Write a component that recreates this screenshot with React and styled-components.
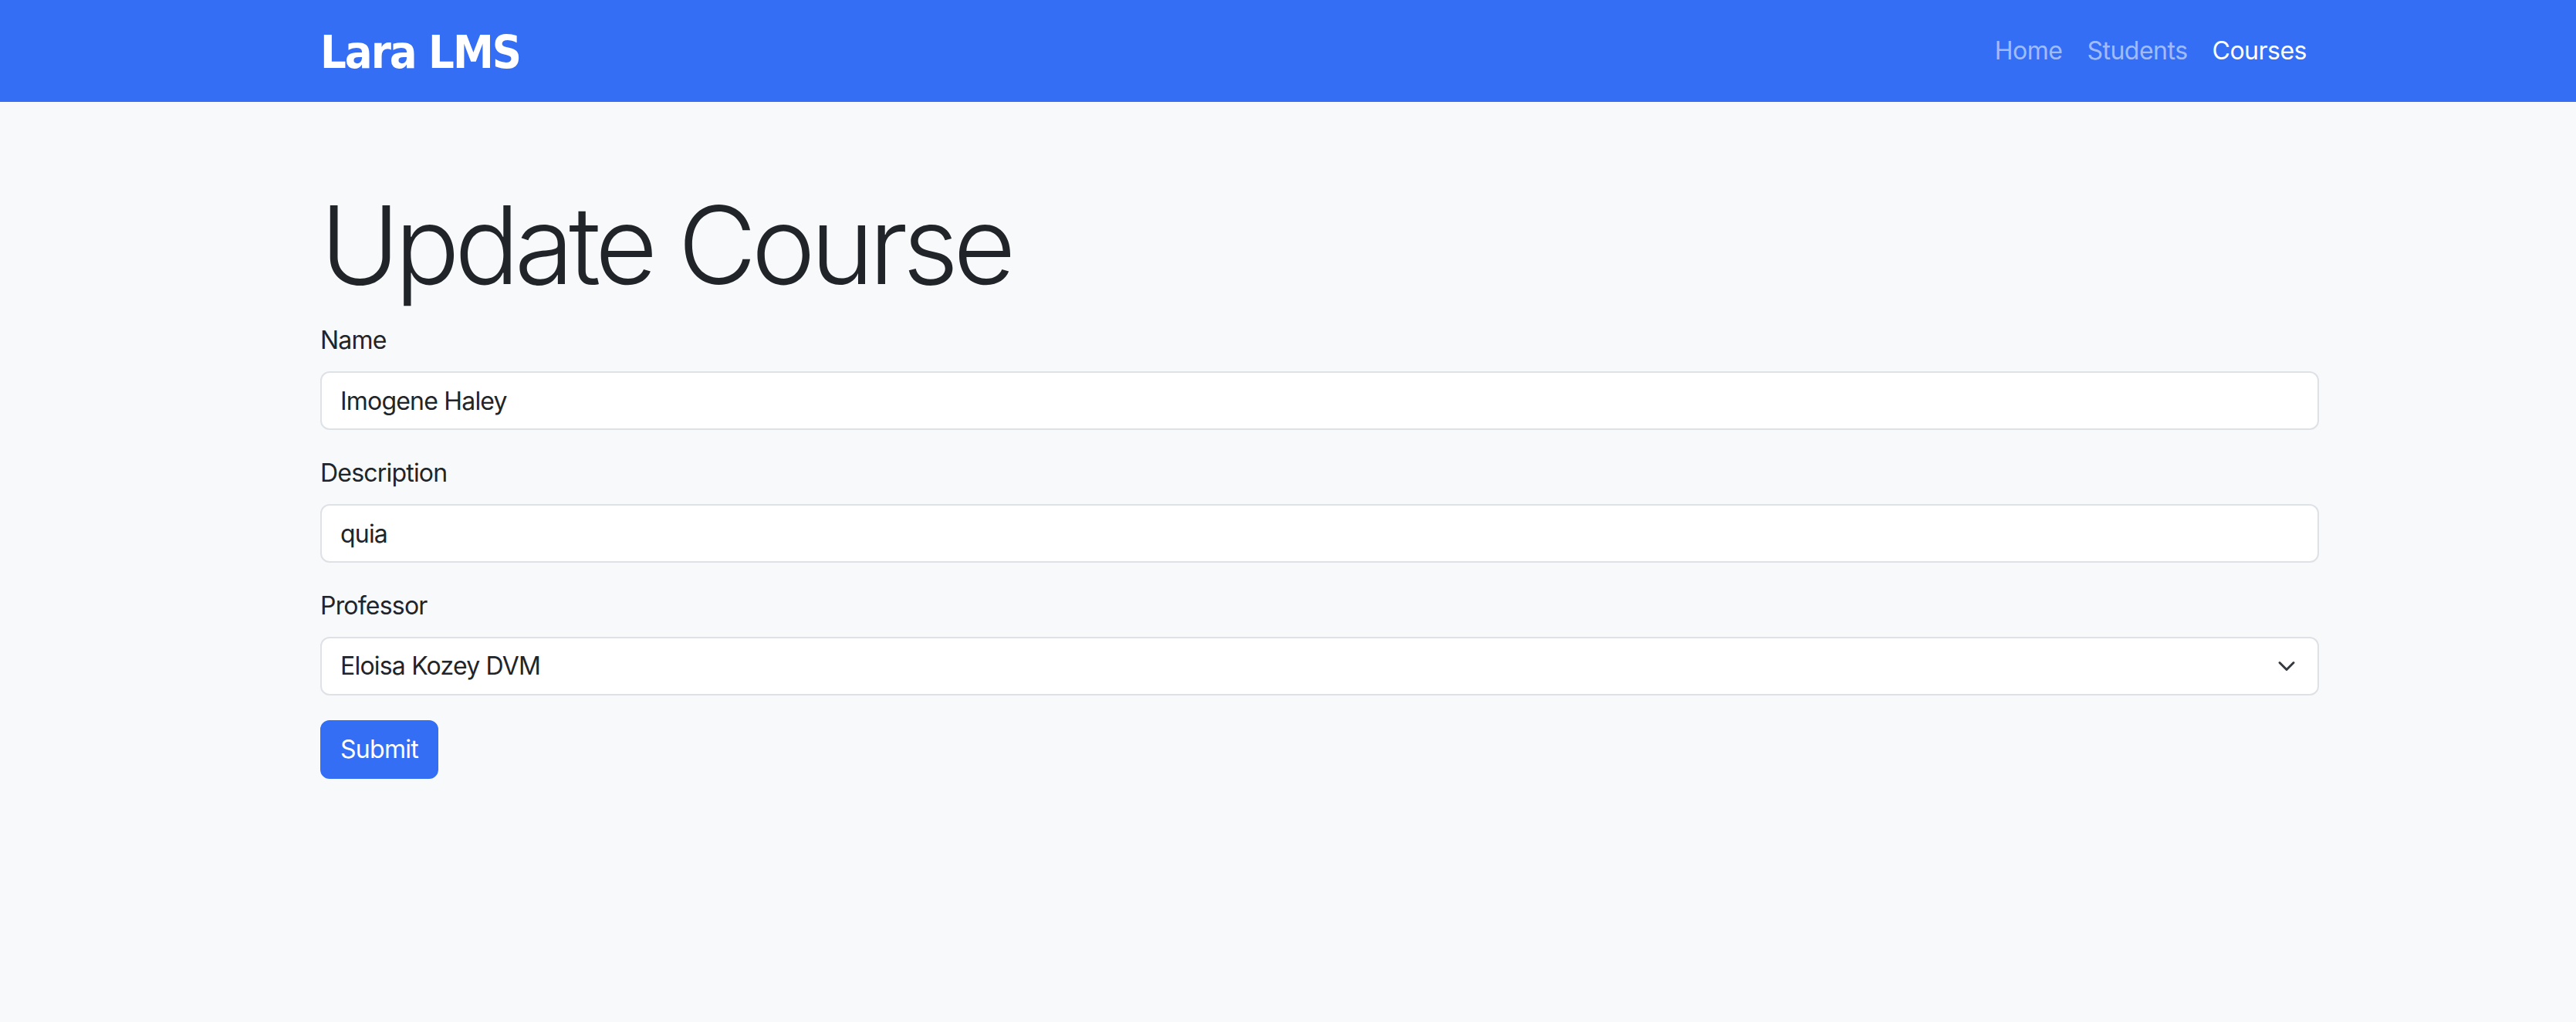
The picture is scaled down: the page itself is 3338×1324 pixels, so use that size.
import React from 'react';
import styled, { createGlobalStyle } from 'styled-components';

const GlobalStyle = createGlobalStyle`
    html, body {
        margin: 0;
        padding: 0;
        background: #f8f9fa;
        color: #212529;
        font-family: Inter, "Noto Sans", sans-serif;
    }

    * {
        box-sizing: border-box;
    }
`;

const Page = styled.div`
    min-height: 100vh;
    background: #f8f9fa;
`;

const NavBar = styled.nav`
    height: 132px;
    background: #336ef4;
`;

const Container = styled.div`
    width: 2590px;
    margin-left: 415px;
`;

const NavInner = styled(Container)`
    height: 100%;
    display: flex;
    align-items: center;
    justify-content: space-between;
`;

const Brand = styled.a`
    font-family: "DejaVu Sans Condensed", "DejaVu Sans", sans-serif;
    font-weight: 700;
    font-size: 59px;
    letter-spacing: -2px;
    color: #fff;
    text-decoration: none;
    line-height: 1;
    padding-top: 2px;
`;

const NavList = styled.ul`
    display: flex;
    list-style: none;
    margin: 0;
    padding: 0;
`;

const NavLink = styled.a`
    display: block;
    padding: 0 16px;
    font-size: 32px;
    line-height: 48px;
    letter-spacing: -0.5px;
    text-decoration: none;
    color: ${p => (p.$active ? '#fff' : 'rgba(255, 255, 255, 0.55)')};
`;

const Main = styled(Container)`
    padding-top: 101px;
`;

const Title = styled.h1`
    margin: 0 0 16px;
    font-size: 140px;
    font-weight: 300;
    line-height: 1.2;
    letter-spacing: -6.6px;
`;

const Field = styled.div`
    margin-bottom: 32px;
`;

const Label = styled.label`
    display: block;
    margin-bottom: 16px;
    font-size: 32px;
    line-height: 48px;
    letter-spacing: -0.8px;
`;

const Input = styled.input`
    display: block;
    width: 100%;
    height: 76px;
    padding: 12px 24px;
    font-family: inherit;
    font-size: 32px;
    line-height: 48px;
    letter-spacing: -0.8px;
    color: #212529;
    background: #fff;
    border: 2px solid #dee2e6;
    border-radius: 12px;
    outline: none;
`;

const SelectWrap = styled.div`
    position: relative;
`;

const Select = styled.select`
    display: block;
    width: 100%;
    height: 76px;
    padding: 12px 72px 12px 24px;
    font-family: inherit;
    font-size: 32px;
    line-height: 48px;
    letter-spacing: -0.8px;
    color: #212529;
    background: #fff;
    border: 2px solid #dee2e6;
    border-radius: 12px;
    appearance: none;
    outline: none;
`;

const Chevron = styled.svg`
    position: absolute;
    right: 26px;
    top: 26px;
    width: 32px;
    height: 24px;
    pointer-events: none;
`;

const Button = styled.button`
    height: 76px;
    padding: 12px 24px;
    font-family: inherit;
    font-size: 32px;
    line-height: 48px;
    letter-spacing: -0.7px;
    color: #fff;
    background: #336ef4;
    border: 2px solid #336ef4;
    border-radius: 12px;
    cursor: pointer;
`;

export default function App() {
    return (
        <Page>
            <GlobalStyle />
            <NavBar>
                <NavInner>
                    <Brand href="#">Lara LMS</Brand>
                    <NavList>
                        <li><NavLink href="#">Home</NavLink></li>
                        <li><NavLink href="#">Students</NavLink></li>
                        <li><NavLink href="#" $active>Courses</NavLink></li>
                    </NavList>
                </NavInner>
            </NavBar>
            <Main>
                <Title>Update Course</Title>
                <form onSubmit={e => e.preventDefault()}>
                    <Field>
                        <Label htmlFor="name">Name</Label>
                        <Input id="name" defaultValue="Imogene Haley" />
                    </Field>
                    <Field>
                        <Label htmlFor="description">Description</Label>
                        <Input id="description" defaultValue="quia" />
                    </Field>
                    <Field>
                        <Label htmlFor="professor">Professor</Label>
                        <SelectWrap>
                            <Select id="professor" defaultValue="1">
                                <option value="1">Eloisa Kozey DVM</option>
                            </Select>
                            <Chevron viewBox="0 0 16 16" preserveAspectRatio="xMidYMid meet">
                                <path d="m2 5 6 6 6-6" fill="none" stroke="#343a40" strokeWidth="2" strokeLinecap="round" strokeLinejoin="round" />
                            </Chevron>
                        </SelectWrap>
                    </Field>
                    <Button type="submit">Submit</Button>
                </form>
            </Main>
        </Page>
    );
}
